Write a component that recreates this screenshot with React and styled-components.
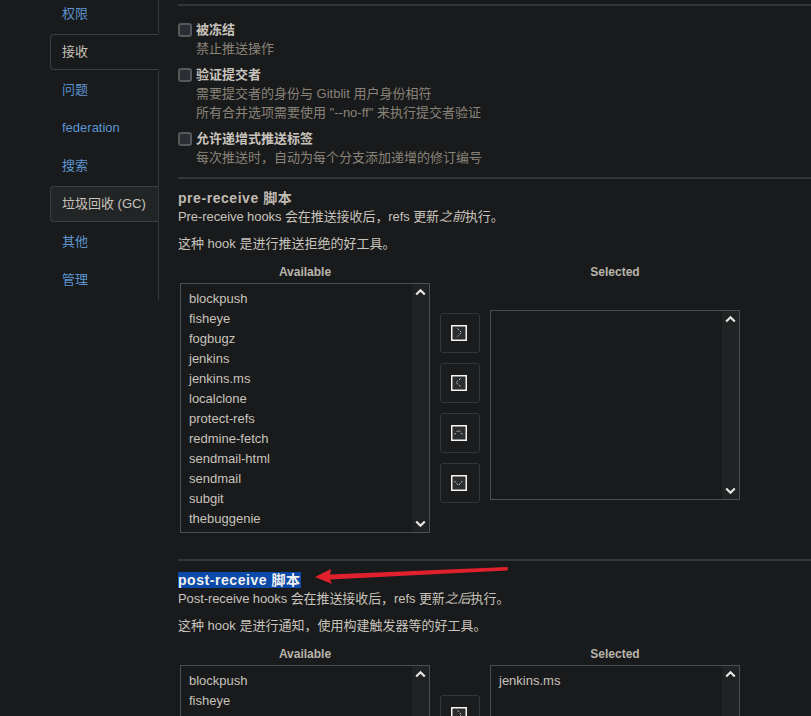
import React from 'react'
import styled, { createGlobalStyle } from 'styled-components'

const GlobalStyle = createGlobalStyle`
html, body {
  margin: 0;
  height: 716px;
  overflow: hidden;
  background: #181a1b;
}
body {
  font-family: "Liberation Sans", "Noto Sans CJK SC", sans-serif;
  font-size: 13px;
  color: #c8c3bc;
}
`

const Page = styled.div`
  display: flex;
  align-items: flex-start;
  margin-top: -4px;
`

const Sidebar = styled.ul`
  list-style: none;
  width: 108px;
  margin: 0 0 0 50px;
  padding: 0;
  flex: none;
  border-right: 1px solid #33373a;
`

const TabItem = styled.li`
  height: 36px;
  margin-bottom: 2px;
  margin-right: ${p => (p.$active ? '-1px' : '0')};
  padding-left: 11px;
  display: flex;
  align-items: center;
  box-sizing: border-box;
  line-height: 18px;
  color: ${p => (p.$active || p.$muted ? '#c8c3bc' : '#5d94cf')};
  background: ${p => (p.$muted ? '#222526' : '#181a1b')};
  border: ${p => (p.$active || p.$muted ? '1px solid #3a3f41' : '1px solid transparent')};
  border-right: ${p => (p.$muted ? '0' : undefined)};
  border-right-color: ${p => (p.$active ? '#181a1b' : undefined)};
  border-radius: 4px 0 0 4px;
`

const Content = styled.div`
  flex: 1;
  min-width: 0;
  padding: 8px 0 0 19px;
  position: relative;
`

const Rule = styled.div`
  height: 2px;
  background: #323638;
  margin: ${p => p.$margin || '0'};
`

const OptionList = styled.div`
  display: flex;
  flex-direction: column;
  gap: 8px;
  margin-top: 15px;
`

const Option = styled.div`
  display: grid;
  grid-template-columns: 18px 1fr;
`

const CheckBox = styled.span`
  display: block;
  width: 14px;
  height: 14px;
  margin-top: 2px;
  box-sizing: border-box;
  background: #2c2e35;
  border: 2px solid #55595c;
  border-radius: 3px;
`

const OptionTitle = styled.div`
  font-weight: bold;
  line-height: 18px;
  color: #c8c3bc;
`

const OptionHint = styled.div`
  grid-column: 2;
  line-height: 19px;
  color: #8a8379;
`

const ScriptTitle = styled.h4`
  margin: 0 0 1px;
  font-size: 14px;
  line-height: 18px;
  font-weight: bold;
  letter-spacing: 0.55px;
  color: #c0bbb3;
`

const Marked = styled.span`
  background: #0b4aa8;
  color: #f2f2f2;
`

const Text = styled.p`
  margin: ${p => p.$margin || '0'};
  line-height: 18px;
  letter-spacing: ${p => (p.$tight ? '-0.08px' : '0')};
  color: #c8c3bc;
`

const DualList = styled.div`
  display: grid;
  grid-template-columns: 250px 40px 250px;
  column-gap: 10px;
  margin: 11px 0 0 2px;
  width: 560px;
`

const ColLabel = styled.div`
  font-size: 12px;
  font-weight: bold;
  line-height: 16px;
  text-align: center;
  color: #b9b4ac;
  margin-bottom: 3px;
`

const ListBox = styled.div`
  box-sizing: border-box;
  height: 250px;
  display: flex;
  border: 1px solid #4a4f52;
  background: #181a1b;
`

const SelectedBox = styled(ListBox)`
  margin-top: ${p => (p.$tall ? '0' : '30px')};
  height: ${p => (p.$tall ? '250px' : '190px')};
`

const Items = styled.div`
  flex: 1;
  padding: 5px 8px;
  line-height: 20px;
  color: #c8c3bc;
`

const ScrollTrack = styled.div`
  width: 17px;
  flex: none;
  background: #202324;
  display: flex;
  flex-direction: column;
  justify-content: space-between;
  align-items: center;
  padding: 4px 0;
  box-sizing: border-box;
`

const ArrowColumn = styled.div`
  display: flex;
  flex-direction: column;
  gap: 10px;
  padding-top: 49px;
`

const MoveButton = styled.button`
  width: 40px;
  height: 40px;
  padding: 0 3px 1px 0;
  display: flex;
  align-items: center;
  justify-content: center;
  background: #1a1c1d;
  border: 1px solid #33373a;
  border-radius: 3px;
`

const PointerArrow = styled.svg`
  position: absolute;
  left: 156px;
  top: 562px;
`

const Chevron = ({ up }) => (
  <svg width="11" height="8" viewBox="0 0 11 8">
    <path d={up ? 'M1.2 6.5 5.5 2.2 9.8 6.5' : 'M1.2 1.5 5.5 5.8 9.8 1.5'} fill="none" stroke="#e8e6e3" strokeWidth="2.2" />
  </svg>
)

const chevrons = {
  right: 'M6.5 3.5 10.5 7.5 6.5 11.5',
  left: 'M9.5 3.5 5 7.5 9.5 11.5',
  up: 'M3.5 9.5 7.5 5 11.5 9.5',
  down: 'M3.5 6 7.5 10.5 11.5 6',
}

const MoveIcon = ({ dir }) => (
  <svg width="16" height="16" viewBox="0 0 16 16">
    <rect x="0.75" y="0.75" width="14.5" height="14.5" fill="#2b2d2f" stroke="#f4f4f4" strokeWidth="1.5" />
    <path d={chevrons[dir]} fill="none" stroke="#d8d8d8" strokeWidth="0.9" strokeDasharray="2 1.3" />
  </svg>
)

const Scrollbar = () => (
  <ScrollTrack>
    <Chevron up />
    <Chevron />
  </ScrollTrack>
)

const hooks = [
  'blockpush', 'fisheye', 'fogbugz', 'jenkins', 'jenkins.ms', 'localclone',
  'protect-refs', 'redmine-fetch', 'sendmail-html', 'sendmail', 'subgit', 'thebuggenie',
]

const tabs = [
  { name: '权限' },
  { name: '接收', active: true },
  { name: '问题' },
  { name: 'federation' },
  { name: '搜索' },
  { name: '垃圾回收 (GC)', muted: true },
  { name: '其他' },
  { name: '管理' },
]

const HookPicker = ({ selected, tall }) => (
  <DualList>
    <div>
      <ColLabel>Available</ColLabel>
      <ListBox>
        <Items>{hooks.map(h => <div key={h}>{h}</div>)}</Items>
        <Scrollbar />
      </ListBox>
    </div>
    <ArrowColumn>
      {['right', 'left', 'up', 'down'].map(d => (
        <MoveButton key={d}><MoveIcon dir={d} /></MoveButton>
      ))}
    </ArrowColumn>
    <div>
      <ColLabel>Selected</ColLabel>
      <SelectedBox $tall={tall}>
        <Items>{selected.map(h => <div key={h}>{h}</div>)}</Items>
        <Scrollbar />
      </SelectedBox>
    </div>
  </DualList>
)

export default function App() {
  return (
    <Page>
      <GlobalStyle />
      <Sidebar>
        {tabs.map(t => (
          <TabItem key={t.name} $active={t.active} $muted={t.muted}>{t.name}</TabItem>
        ))}
      </Sidebar>
      <Content>
        <Rule />
        <OptionList>
          <Option>
            <CheckBox />
            <OptionTitle>被冻结</OptionTitle>
            <OptionHint>禁止推送操作</OptionHint>
          </Option>
          <Option>
            <CheckBox />
            <OptionTitle>验证提交者</OptionTitle>
            <OptionHint>
              需要提交者的身份与 Gitblit 用户身份相符<br />
              所有合并选项需要使用 "--no-ff" 来执行提交者验证
            </OptionHint>
          </Option>
          <Option>
            <CheckBox />
            <OptionTitle>允许递增式推送标签</OptionTitle>
            <OptionHint>每次推送时，自动为每个分支添加递增的修订编号</OptionHint>
          </Option>
        </OptionList>
        <Rule $margin="10px 0" />
        <ScriptTitle>pre-receive 脚本</ScriptTitle>
        <Text $tight>Pre-receive hooks 会在推送接收后，refs 更新<em>之前</em>执行。</Text>
        <Text $margin="9px 0 0">这种 hook 是进行推送拒绝的好工具。</Text>
        <HookPicker selected={[]} />
        <Rule $margin="26px 0 10px" />
        <ScriptTitle><Marked>post-receive 脚本</Marked></ScriptTitle>
        <Text $tight>Post-receive hooks 会在推送接收后，refs 更新<em>之后</em>执行。</Text>
        <Text $margin="9px 0 0">这种 hook 是进行通知，使用构建触发器等的好工具。</Text>
        <HookPicker selected={['jenkins.ms']} tall />
        <PointerArrow width="195" height="28" viewBox="0 0 195 28">
          <path d="M0 19 L16 11 L15 16.5 L192 9 Q194 10.5 192 12.5 L15 21.5 L17 26 Z" fill="#e0202c" />
        </PointerArrow>
      </Content>
    </Page>
  )
}
